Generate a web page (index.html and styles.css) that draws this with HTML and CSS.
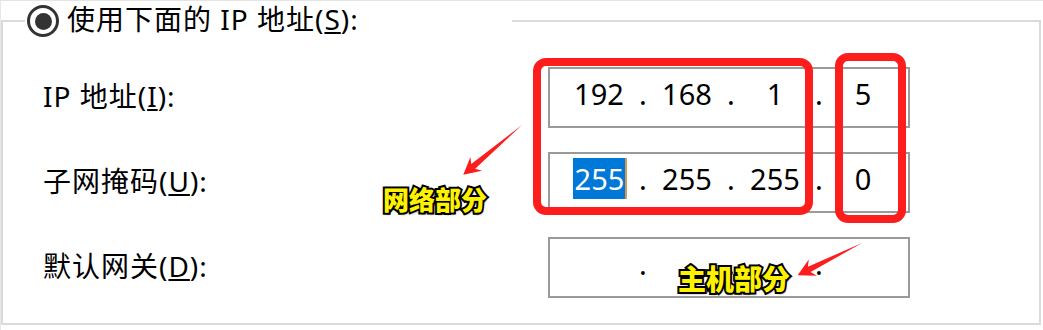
FILE: index.html
```html
<!DOCTYPE html>
<html lang="zh-CN">
<head>
<meta charset="utf-8">
<title>IP 设置</title>
<link rel="stylesheet" href="styles.css">
</head>
<body>
<div class="page">
  <fieldset class="group">
    <legend class="legend">
      <span class="radio"><span class="radio-dot"></span></span>
      <span class="legend-text">使用下面的 IP 地址(<u>S</u>):</span>
    </legend>
    <div class="rows">
      <div class="row">
        <label class="label">IP 地址(<u>I</u>):</label>
        <div class="ipbox">
          <span class="field">192</span><span class="dot">.</span>
          <span class="field">168</span><span class="dot">.</span>
          <span class="field">1</span><span class="dot">.</span>
          <span class="field">5</span>
        </div>
      </div>
      <div class="row">
        <label class="label">子网掩码(<u>U</u>):</label>
        <div class="ipbox">
          <span class="field"><span class="sel">255</span></span><span class="dot">.</span>
          <span class="field">255</span><span class="dot">.</span>
          <span class="field">255</span><span class="dot">.</span>
          <span class="field">0</span>
        </div>
      </div>
      <div class="row">
        <label class="label">默认网关(<u>D</u>):</label>
        <div class="ipbox">
          <span class="field"></span><span class="dot">.</span>
          <span class="field"></span><span class="dot">.</span>
          <span class="field"></span><span class="dot">.</span>
          <span class="field"></span>
        </div>
      </div>
    </div>
  </fieldset>

  <svg class="annot" width="1043" height="330" viewBox="0 0 1043 330" xmlns="http://www.w3.org/2000/svg">
    <rect x="537" y="62" width="272" height="149" rx="9" ry="9" fill="none" stroke="#fd1d1d" stroke-width="8"/>
    <rect x="839" y="57" width="63" height="162" rx="9" ry="9" fill="none" stroke="#fd1d1d" stroke-width="8"/>
    <g transform="translate(522,125) rotate(139.7)">
      <polygon points="0,0 64,-3 60,-9 77,0 60,9 64,3" fill="#fd1d1d"/>
    </g>
    <g transform="translate(862,243) rotate(153.4)">
      <polygon points="0,0 59,-3 55,-9 72,0 55,9 59,3" fill="#fd1d1d"/>
    </g>
  </svg>

  <span class="tag tag-net">网络部分</span>
  <span class="tag tag-host">主机部分</span>
</div>
</body>
</html>
```

FILE: styles.css
```css
html, body {
  margin: 0;
  padding: 0;
  background: #ffffff;
}

body {
  width: 1043px;
  height: 330px;
  overflow: hidden;
  font-family: "Noto Sans", "Noto Sans CJK SC", sans-serif;
  color: #000;
  box-shadow: inset 0 1px 0 #e4e4e4, inset 1px 0 0 #e8e8e8;
}

.page {
  position: relative;
  width: 1043px;
  height: 330px;
  padding-top: 1px;
  box-sizing: border-box;
}

.group {
  margin: 0 2px 0 1px;
  padding: 0;
  border: 2px solid #dadada;
  min-width: 0;
}

.legend {
  margin-left: 22px;
  padding: 0 0 0 2px;
  width: 487px;
  height: 40px;
  box-sizing: border-box;
  display: flex;
  align-items: center;
  gap: 8px;
}

.radio {
  width: 32px;
  height: 32px;
  box-sizing: border-box;
  border: 3px solid #333;
  border-radius: 50%;
  display: flex;
  align-items: center;
  justify-content: center;
  flex: none;
}

.radio-dot {
  width: 17px;
  height: 17px;
  border-radius: 50%;
  background: #333;
}

.legend-text {
  font-size: 28px;
  line-height: 34px;
  letter-spacing: 1px;
  padding-bottom: 5px;
  white-space: nowrap;
}

.rows {
  padding: 14px 0 13px 40px;
}

.row {
  display: grid;
  grid-template-columns: 505px 362px;
  height: 85px;
  align-items: center;
}

.label {
  font-size: 28px;
  line-height: 34px;
  letter-spacing: 1px;
  padding-bottom: 4px;
  white-space: nowrap;
}

.ipbox {
  width: 362px;
  height: 61px;
  box-sizing: border-box;
  border: 2px solid #9a9a9a;
  padding: 0 0 8px 14px;
  display: flex;
  align-items: center;
  font-size: 29px;
  line-height: 41px;
}

.field {
  width: 70px;
  height: 41px;
  text-align: center;
  white-space: nowrap;
}

.dot {
  width: 18px;
  text-align: center;
}

.sel {
  display: inline-block;
  background: #0078d7;
  color: #fff;
  padding: 0 1px 0 2px;
  box-shadow: 2px 0 0 #d89a4a;
}

.annot {
  position: absolute;
  left: 0;
  top: 0;
  pointer-events: none;
}

.tag {
  position: absolute;
  font-family: "Noto Sans CJK SC", sans-serif;
  font-weight: 900;
  color: #fff200;
  line-height: 1;
  white-space: nowrap;
  -webkit-text-stroke: 4px #000;
  paint-order: stroke fill;
  text-shadow: 1px 2px 2px rgba(0, 0, 0, 0.45);
}

.tag-net {
  left: 383px;
  top: 186px;
  font-size: 26px;
}

.tag-host {
  left: 678px;
  top: 264px;
  font-size: 28px;
}
```
